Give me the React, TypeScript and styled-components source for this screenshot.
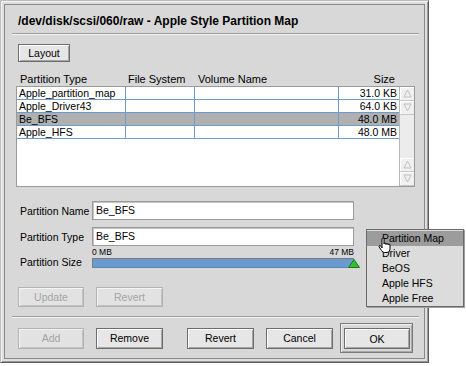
import React from 'react'
import styled, { createGlobalStyle } from 'styled-components'

const GlobalStyle = createGlobalStyle`
  html, body {
    margin: 0;
    padding: 0;
    background: #fff;
  }
  body {
    font-family: "Liberation Sans", Arial, sans-serif;
    font-size: 10.5px;
    color: #000;
  }
  #root {
    width: 466px;
    height: 366px;
    overflow: hidden;
  }
`

const Frame = styled.div`
  position: relative;
  width: 429px;
  height: 363px;
  box-sizing: border-box;
  border: 1px solid;
  border-color: #bcbcbc #5c5c5c #5c5c5c #bcbcbc;
  box-shadow: inset 1px 1px #f4f4f4, inset -1px -1px #9a9a9a;
  background: #dedede;
  padding: 3px;
`

const Panel = styled.div`
  height: 100%;
  box-sizing: border-box;
  border: 1px solid #8a8a8a;
  background: #d8d8d8;
  padding: 0 9px 0 11px;
  display: flex;
  flex-direction: column;
`

const Title = styled.div`
  margin-top: 9px;
  padding-left: 2px;
  height: 14px;
  line-height: 14px;
  font-size: 12px;
  font-weight: bold;
`

const Separator = styled.div<{ $top: number }>`
  margin: ${p => p.$top}px -4px 0;
  border-top: 1px solid #9c9c9c;
  border-bottom: 1px solid #f6f6f6;
`

const Button = styled.button<{ $w: number; $h?: number }>`
  width: ${p => p.$w}px;
  height: ${p => p.$h ?? 21}px;
  box-sizing: border-box;
  padding: 0;
  margin: 0;
  font-family: inherit;
  font-size: 10.5px;
  color: #000;
  background: #e6e6e6;
  border: 1px solid #6c6c6c;
  box-shadow: inset 1px 1px #fff, inset -1px -1px #a6a6a6;
  &:disabled {
    color: #a4a4a4;
    border-color: #b2b2b2;
    background: #e2e2e2;
    box-shadow: inset 1px 1px #f4f4f4, inset -1px -1px #c4c4c4;
  }
`

const LayoutRow = styled.div`
  margin-top: 9px;
  padding-left: 2px;
  display: flex;
`

const HeaderRow = styled.div`
  margin-top: 10px;
  height: 14px;
  line-height: 14px;
  font-size: 11px;
  display: flex;
  padding-left: 4px;
`

const HeaderCell = styled.div<{ $w: number; $right?: boolean }>`
  width: ${p => p.$w}px;
  text-align: ${p => (p.$right ? 'right' : 'left')};
`

const ListBox = styled.div`
  height: 101px;
  box-sizing: border-box;
  border: 1px solid #9a9a9a;
  background: #fff;
  display: flex;
`

const Rows = styled.div`
  flex: 1;
  display: flex;
  flex-direction: column;
`

const Row = styled.div<{ $selected?: boolean }>`
  height: 12px;
  line-height: 12px;
  display: flex;
  border-bottom: 1px solid #6b9bd0;
  background: ${p => (p.$selected ? '#b0b0b0' : '#fff')};
`

const Cell = styled.div<{ $w: number; $right?: boolean; $last?: boolean }>`
  width: ${p => p.$w}px;
  box-sizing: border-box;
  padding: 0 2px;
  white-space: nowrap;
  overflow: hidden;
  text-align: ${p => (p.$right ? 'right' : 'left')};
  border-right: ${p => (p.$last ? 'none' : '1px solid #6b9bd0')};
`

const ScrollBar = styled.div`
  width: 14px;
  border-left: 1px solid #b8b8b8;
  background: #ececec;
  display: flex;
  flex-direction: column;
  justify-content: space-between;
`

const ArrowGroup = styled.div`
  display: flex;
  flex-direction: column;
`

const ArrowButton = styled.div`
  height: 13px;
  display: flex;
  align-items: center;
  justify-content: center;
  border-bottom: 1px solid #c8c8c8;
  background: #f0f0f0;
  box-shadow: inset 1px 1px #fff;
`

const FieldRow = styled.div<{ $top: number }>`
  margin-top: ${p => p.$top}px;
  display: flex;
  align-items: center;
`

const Label = styled.div`
  width: 76px;
  box-sizing: border-box;
  padding-left: 4px;
`

const Input = styled.div`
  width: 262px;
  height: 19px;
  box-sizing: border-box;
  border: 1px solid #9a9a9a;
  box-shadow: inset 1px 1px #c4c4c4;
  background: #fff;
  line-height: 17px;
  padding-left: 3px;
`

const SizeRow = styled.div`
  margin-top: 1px;
  display: flex;
  align-items: flex-end;
`

const SliderBox = styled.div`
  width: 262px;
  display: flex;
  flex-direction: column;
`

const Scale = styled.div`
  display: flex;
  justify-content: space-between;
  height: 11px;
  line-height: 11px;
  font-size: 8.5px;
`

const TrackRow = styled.div`
  position: relative;
  height: 10px;
`

const Track = styled.div`
  height: 10px;
  box-sizing: border-box;
  border: 1px solid;
  border-color: #7a7a7a #6b9bd0 #5a86bb #7a7a7a;
  background: #6a9bd0;
`

const Thumb = styled.svg`
  position: absolute;
  right: -6px;
  top: 1px;
`

const ButtonRow = styled.div<{ $top: number }>`
  margin-top: ${p => p.$top}px;
  padding-left: 2px;
  display: flex;
  align-items: center;
`

const Gap = styled.div<{ $w: number }>`
  width: ${p => p.$w}px;
  flex: none;
`

const DefaultFrame = styled.div`
  padding: 4px 2px 3px 3px;
  border: 1px solid #7a7a7a;
  box-shadow: inset 1px 1px #f0f0f0, inset -1px -1px #a8a8a8;
  display: flex;
`

const Menu = styled.div`
  position: absolute;
  left: 365px;
  top: 228px;
  width: 98px;
  box-sizing: border-box;
  border: 1px solid #6a6a6a;
  box-shadow: 1px 1px 0 #a0a0a0;
  background: #dcdcdc;
  padding: 1px 0 0;
`

const MenuItem = styled.div<{ $active?: boolean }>`
  height: 15px;
  line-height: 15px;
  padding-left: 15px;
  background: ${p => (p.$active ? '#9c9c9c' : 'transparent')};
`

const Cursor = styled.svg`
  position: absolute;
  left: 377px;
  top: 236px;
`

const columns = [109, 69, 144, 60]

const partitions = [
  { type: 'Apple_partition_map', size: '31.0 KB' },
  { type: 'Apple_Driver43', size: '64.0 KB' },
  { type: 'Be_BFS', size: '48.0 MB', selected: true },
  { type: 'Apple_HFS', size: '48.0 MB' },
]

const menuItems = ['Partition Map', 'Driver', 'BeOS', 'Apple HFS', 'Apple Free']

function Arrow({ up }: { up?: boolean }) {
  return (
    <svg width="9" height="9" viewBox="0 0 9 9">
      <polygon
        points={up ? '4.5,1 8,8 1,8' : '1,1 8,1 4.5,8'}
        fill="none"
        stroke="#c0c0c0"
        strokeWidth="1"
      />
    </svg>
  )
}

export default function App() {
  return (
    <>
      <GlobalStyle />
      <Frame>
        <Panel>
          <Title>/dev/disk/scsi/060/raw - Apple Style Partition Map</Title>
          <Separator $top={5} />
          <LayoutRow>
            <Button $w={52} $h={18}>Layout</Button>
          </LayoutRow>
          <HeaderRow>
            <HeaderCell $w={108}>Partition Type</HeaderCell>
            <HeaderCell $w={70}>File System</HeaderCell>
            <HeaderCell $w={145}>Volume Name</HeaderCell>
            <HeaderCell $w={52} $right>Size</HeaderCell>
          </HeaderRow>
          <ListBox>
            <Rows>
              {partitions.map(p => (
                <Row key={p.type} $selected={p.selected}>
                  <Cell $w={columns[0]}>{p.type}</Cell>
                  <Cell $w={columns[1]} />
                  <Cell $w={columns[2]} />
                  <Cell $w={columns[3]} $right $last>{p.size}</Cell>
                </Row>
              ))}
            </Rows>
            <ScrollBar>
              <ArrowGroup>
                <ArrowButton><Arrow up /></ArrowButton>
                <ArrowButton><Arrow /></ArrowButton>
              </ArrowGroup>
              <ArrowGroup>
                <ArrowButton><Arrow up /></ArrowButton>
                <ArrowButton><Arrow /></ArrowButton>
              </ArrowGroup>
            </ScrollBar>
          </ListBox>
          <FieldRow $top={14}>
            <Label>Partition Name</Label>
            <Input>Be_BFS</Input>
          </FieldRow>
          <FieldRow $top={7}>
            <Label>Partition Type</Label>
            <Input>Be_BFS</Input>
          </FieldRow>
          <SizeRow>
            <Label>Partition Size</Label>
            <SliderBox>
              <Scale>
                <span>0 MB</span>
                <span>47 MB</span>
              </Scale>
              <TrackRow>
                <Track />
                <Thumb width="12" height="9" viewBox="0 0 12 9">
                  <polygon points="6,0.5 11.5,8.5 0.5,8.5" fill="#30c030" stroke="#1c7a1c" strokeWidth="1" />
                </Thumb>
              </TrackRow>
            </SliderBox>
          </SizeRow>
          <ButtonRow $top={19}>
            <Button $w={66} $h={20} disabled>Update</Button>
            <Gap $w={12} />
            <Button $w={67} $h={20} disabled>Revert</Button>
          </ButtonRow>
          <Separator $top={9} />
          <ButtonRow $top={5}>
            <Button $w={66} disabled>Add</Button>
            <Gap $w={12} />
            <Button $w={67}>Remove</Button>
            <Gap $w={24} />
            <Button $w={67}>Revert</Button>
            <Gap $w={12} />
            <Button $w={67}>Cancel</Button>
            <Gap $w={7} />
            <DefaultFrame>
              <Button $w={66}>OK</Button>
            </DefaultFrame>
          </ButtonRow>
        </Panel>
        <Menu>
          {menuItems.map((m, i) => (
            <MenuItem key={m} $active={i === 0}>{m}</MenuItem>
          ))}
        </Menu>
        <Cursor width="16" height="17" viewBox="0 0 16 17">
          <path
            d="M4 2 Q4 1 5 1 Q6 1 6 2 V7 Q6 6 7 6 Q8 6 8 7 V7.5 Q8 6.5 9 6.5 Q10 6.5 10 7.5 V8 Q10 7 11 7 Q12 7 12 8 V12 Q12 15.5 9 15.5 H6.5 Q4.5 15.5 3.5 13.5 L1.2 10 Q0.6 8.8 1.6 8.6 Q2.6 8.4 3.2 9.6 L4 11 Z"
            fill="#fff"
            stroke="#000"
            strokeWidth="1"
            strokeLinejoin="round"
          />
        </Cursor>
      </Frame>
    </>
  )
}
